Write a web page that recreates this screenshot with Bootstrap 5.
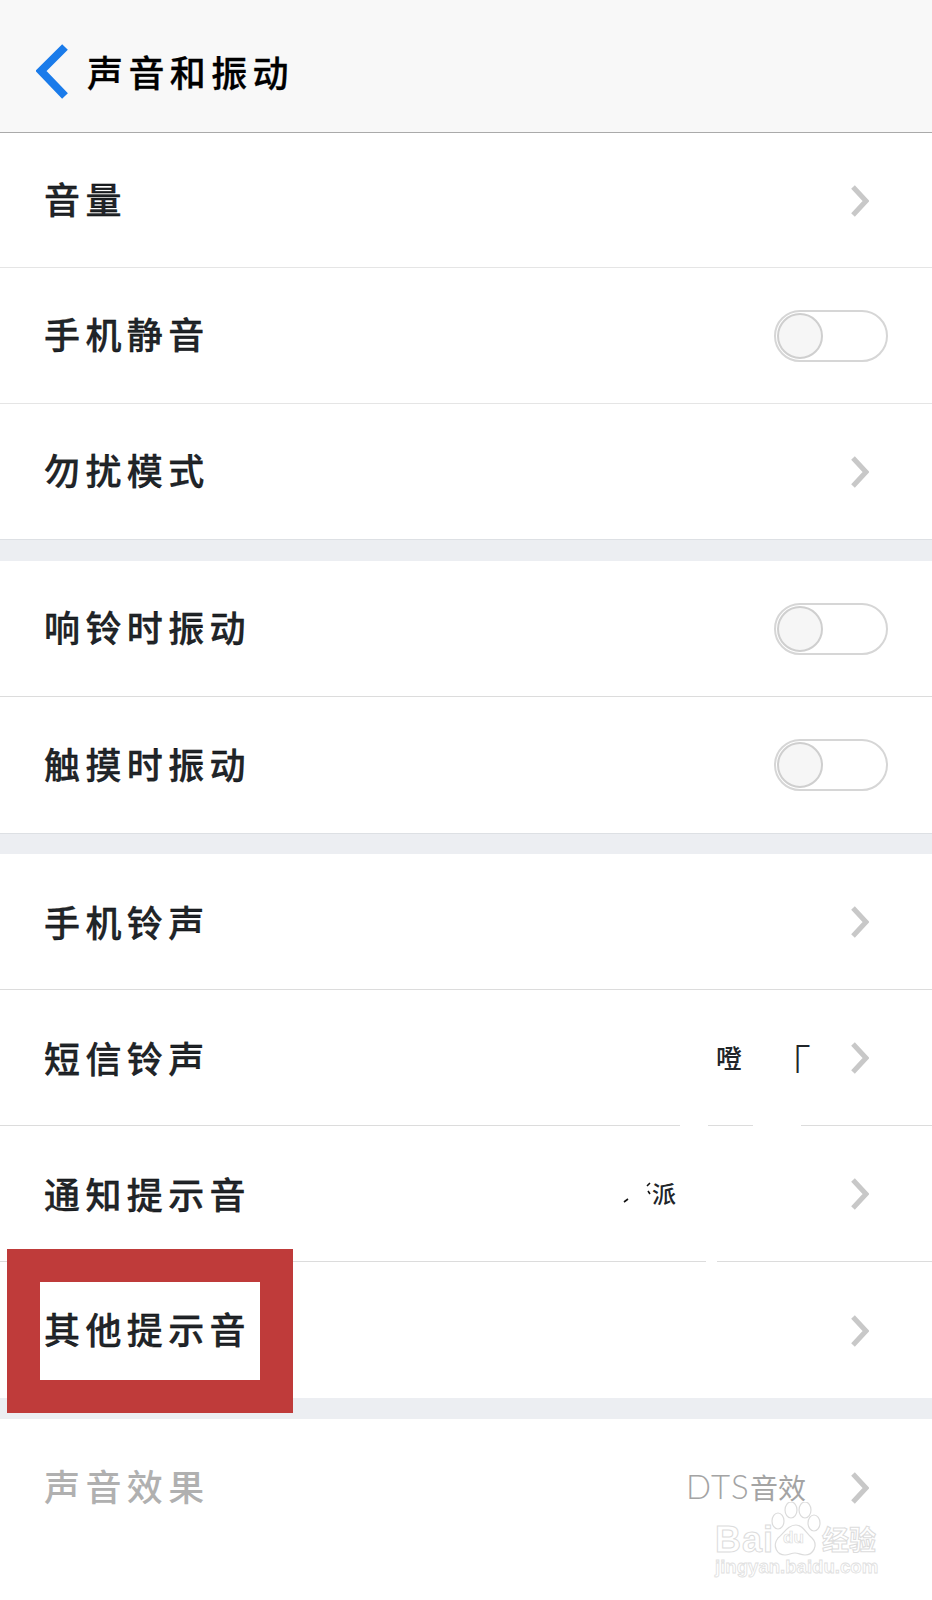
<!DOCTYPE html>
<html lang="zh-CN">
<head>
<meta charset="utf-8">
<title>声音和振动</title>
<link href="https://cdn.jsdelivr.net/npm/bootstrap@5.3.0/dist/css/bootstrap.min.css" rel="stylesheet">
<style>
body{background:#fff;font-family:"Noto Sans CJK SC","Liberation Serif",sans-serif;color:#000}
.phone{width:932px;min-height:1600px;overflow:hidden}
.top-bar{height:133px;padding:14px 0 0 36px;background:#f8f8f8;border-bottom:1px solid #aaa}
.back-arrow{width:32px;height:56px;margin-right:19px;margin-bottom:2px}
.cn-label{font-size:36px;letter-spacing:5.4px;line-height:44px;padding-bottom:4px;font-weight:500;-webkit-text-stroke:.3px #000;white-space:nowrap}
.top-bar .cn-label{margin-top:-1px}
.setting-row{height:136px;padding:0 44px 0 44px;border:0;border-bottom:1px solid #dcdcdc;border-radius:0!important;background:#fff}
.first-group .setting-row{height:135.33px}
.first-group .setting-row:first-child,.first-group .setting-row:nth-child(2){border-bottom-color:#e5e5e5}
.third-group .setting-row:nth-child(-n+3) .cn-label{padding-bottom:1px}
.group-gap{background:#eceef2;height:21px;border-bottom:0}
.first-gap{height:22px;border-top:1px solid #dde0e4}
.second-gap{border-top:1px solid #dde0e4}
.chev{width:18px;height:32px;margin-right:19px;margin-top:2px;flex:none}
.ios-toggle{width:114px;height:52px;border:2px solid #d6d6d6;border-radius:26px;background:#fff;padding:1px;margin-top:1px}
.ios-knob{width:46px;height:46px;border:2px solid #cfcfcf;border-radius:50%;background:#f6f6f6}
.glitch{font-size:26px;line-height:30px;font-weight:500}
.glitch-a{margin-right:40px}
.glitch-a-end{font-size:42px;margin:6px 0 -6px 27px;width:42px;font-weight:300}
.glitch-b{margin-right:175px;font-size:24px}
.specks{width:40px;height:30px;margin-right:-11px}
.wipe{position:absolute;bottom:-1px;height:3px;background:#fff}
.wipe-1{left:680px;width:28px}
.wipe-2{left:753px;width:48px}
.wipe-3{left:706px;width:11px}
.red-frame{position:absolute;left:7px;top:-13px;width:286px;height:164px;border:33px solid #bf3b3a;z-index:3}
.dim .cn-label{color:#b0b0b0;-webkit-text-stroke:0}
.dim-value{font-family:"Lato","Noto Sans CJK SC",sans-serif;font-weight:300;font-size:33px;letter-spacing:1.2px;color:#a4a4a4;margin-right:45px;line-height:40px;white-space:nowrap}
.dim-value .cjk{font-family:"Noto Sans CJK SC",sans-serif;font-size:28px;font-weight:400;letter-spacing:0}
.mark-wrap{position:absolute;left:712px;top:1500px;width:175px;height:84px;z-index:2}
.mark-paw{position:absolute;left:56px;top:2px;width:72px;height:58px}
.mark-bai,.mark-jing,.mark-jy,.mark-du{position:absolute;color:transparent;-webkit-text-stroke:1px #dcdcdc;white-space:nowrap;line-height:1}
.mark-bai{left:3px;top:22px;font:700 36px "Liberation Sans",sans-serif;letter-spacing:1px;line-height:1}
.mark-du{left:71px;top:29px;font:700 17px "Liberation Sans",sans-serif;-webkit-text-stroke:.7px #dcdcdc;line-height:1}
.mark-jy{left:110px;top:25px;font:700 27px "Noto Sans CJK SC",sans-serif;line-height:1}
.mark-jing{left:3px;top:58px;font:700 18.6px "Liberation Sans",sans-serif;-webkit-text-stroke:.8px #e0e0e0;line-height:1}
</style>
</head>
<body>
<div class="phone position-relative">
  <nav class="navbar top-bar flex-nowrap justify-content-start align-items-center">
    <svg class="back-arrow" viewBox="0 0 32 56" aria-hidden="true"><path d="M29 3 5 27 29 52" fill="none" stroke="#1a7bea" stroke-width="8" stroke-linejoin="miter"/></svg>
    <span class="cn-label">声音和振动</span>
  </nav>

  <div class="list-group list-group-flush first-group">
    <div class="list-group-item setting-row d-flex align-items-center justify-content-between">
      <span class="cn-label">音量</span>
      <svg class="chev" viewBox="0 0 18 32"><path d="M2 2 15 16 2 30" fill="none" stroke="#c8c8c8" stroke-width="5"/></svg>
    </div>
    <div class="list-group-item setting-row d-flex align-items-center justify-content-between">
      <span class="cn-label">手机静音</span>
      <span class="ios-toggle d-flex align-items-center"><span class="ios-knob"></span></span>
    </div>
    <div class="list-group-item setting-row d-flex align-items-center justify-content-between">
      <span class="cn-label">勿扰模式</span>
      <svg class="chev" viewBox="0 0 18 32"><path d="M2 2 15 16 2 30" fill="none" stroke="#c8c8c8" stroke-width="5"/></svg>
    </div>
  </div>
  <div class="group-gap first-gap"></div>

  <div class="list-group list-group-flush">
    <div class="list-group-item setting-row d-flex align-items-center justify-content-between">
      <span class="cn-label">响铃时振动</span>
      <span class="ios-toggle d-flex align-items-center"><span class="ios-knob"></span></span>
    </div>
    <div class="list-group-item setting-row d-flex align-items-center justify-content-between">
      <span class="cn-label">触摸时振动</span>
      <span class="ios-toggle d-flex align-items-center"><span class="ios-knob"></span></span>
    </div>
  </div>
  <div class="group-gap second-gap"></div>

  <div class="list-group list-group-flush overflow-visible third-group">
    <div class="list-group-item setting-row d-flex align-items-center">
      <span class="cn-label me-auto">手机铃声</span>
      <svg class="chev" viewBox="0 0 18 32"><path d="M2 2 15 16 2 30" fill="none" stroke="#c8c8c8" stroke-width="5"/></svg>
    </div>
    <div class="list-group-item setting-row d-flex align-items-center">
      <span class="cn-label me-auto">短信铃声</span>
      <span class="glitch d-flex glitch-a"><span>噔</span><span class="glitch-a-end">「</span></span>
      <svg class="chev" viewBox="0 0 18 32"><path d="M2 2 15 16 2 30" fill="none" stroke="#c8c8c8" stroke-width="5"/></svg>
      <span class="wipe wipe-1"></span><span class="wipe wipe-2"></span>
    </div>
    <div class="list-group-item setting-row d-flex align-items-center">
      <span class="cn-label me-auto">通知提示音</span>
      <svg class="specks" viewBox="0 0 40 30"><path d="M1 24 5 21M24 8 27 5M25 13 27 16" stroke="#111" stroke-width="1.6" fill="none"/></svg>
      <span class="glitch glitch-b">派</span>
      <svg class="chev" viewBox="0 0 18 32"><path d="M2 2 15 16 2 30" fill="none" stroke="#c8c8c8" stroke-width="5"/></svg>
      <span class="wipe wipe-3"></span>
    </div>
    <div class="list-group-item setting-row d-flex align-items-center justify-content-between">
      <span class="cn-label">其他提示音</span>
      <svg class="chev" viewBox="0 0 18 32"><path d="M2 2 15 16 2 30" fill="none" stroke="#c8c8c8" stroke-width="5"/></svg>
      <span class="red-frame"></span>
    </div>
  </div>
  <div class="group-gap"></div>

  <div class="list-group list-group-flush dim">
    <div class="list-group-item setting-row d-flex align-items-center">
      <span class="cn-label me-auto">声音效果</span>
      <span class="dim-value">DTS<span class="cjk">音效</span></span>
      <svg class="chev" viewBox="0 0 18 32"><path d="M2 2 15 16 2 30" fill="none" stroke="#c8c8c8" stroke-width="5"/></svg>
    </div>
  </div>

  <div class="mark-wrap">
    <span class="mark-bai">Bai</span>
    <svg class="mark-paw" viewBox="0 0 72 58" aria-hidden="true">
      <g fill="none" stroke="#dcdcdc" stroke-width="1.2">
        <ellipse cx="10" cy="19" rx="6" ry="8"/><ellipse cx="23" cy="8" rx="6" ry="8"/>
        <ellipse cx="37" cy="8" rx="6" ry="8"/><ellipse cx="46" cy="21" rx="6" ry="8"/>
        <path d="M28 23c7 0 10 8 16 13 7 7 1 17-7 17-5 0-6-2-10-2s-6 2-10 2c-8 0-13-9-7-17 6-5 10-13 18-13z"/>
      </g>
    </svg>
    <span class="mark-du">du</span>
    <span class="mark-jy">经验</span>
    <span class="mark-jing">jingyan.baidu.com</span>
  </div>
</div>
</body>
</html>
